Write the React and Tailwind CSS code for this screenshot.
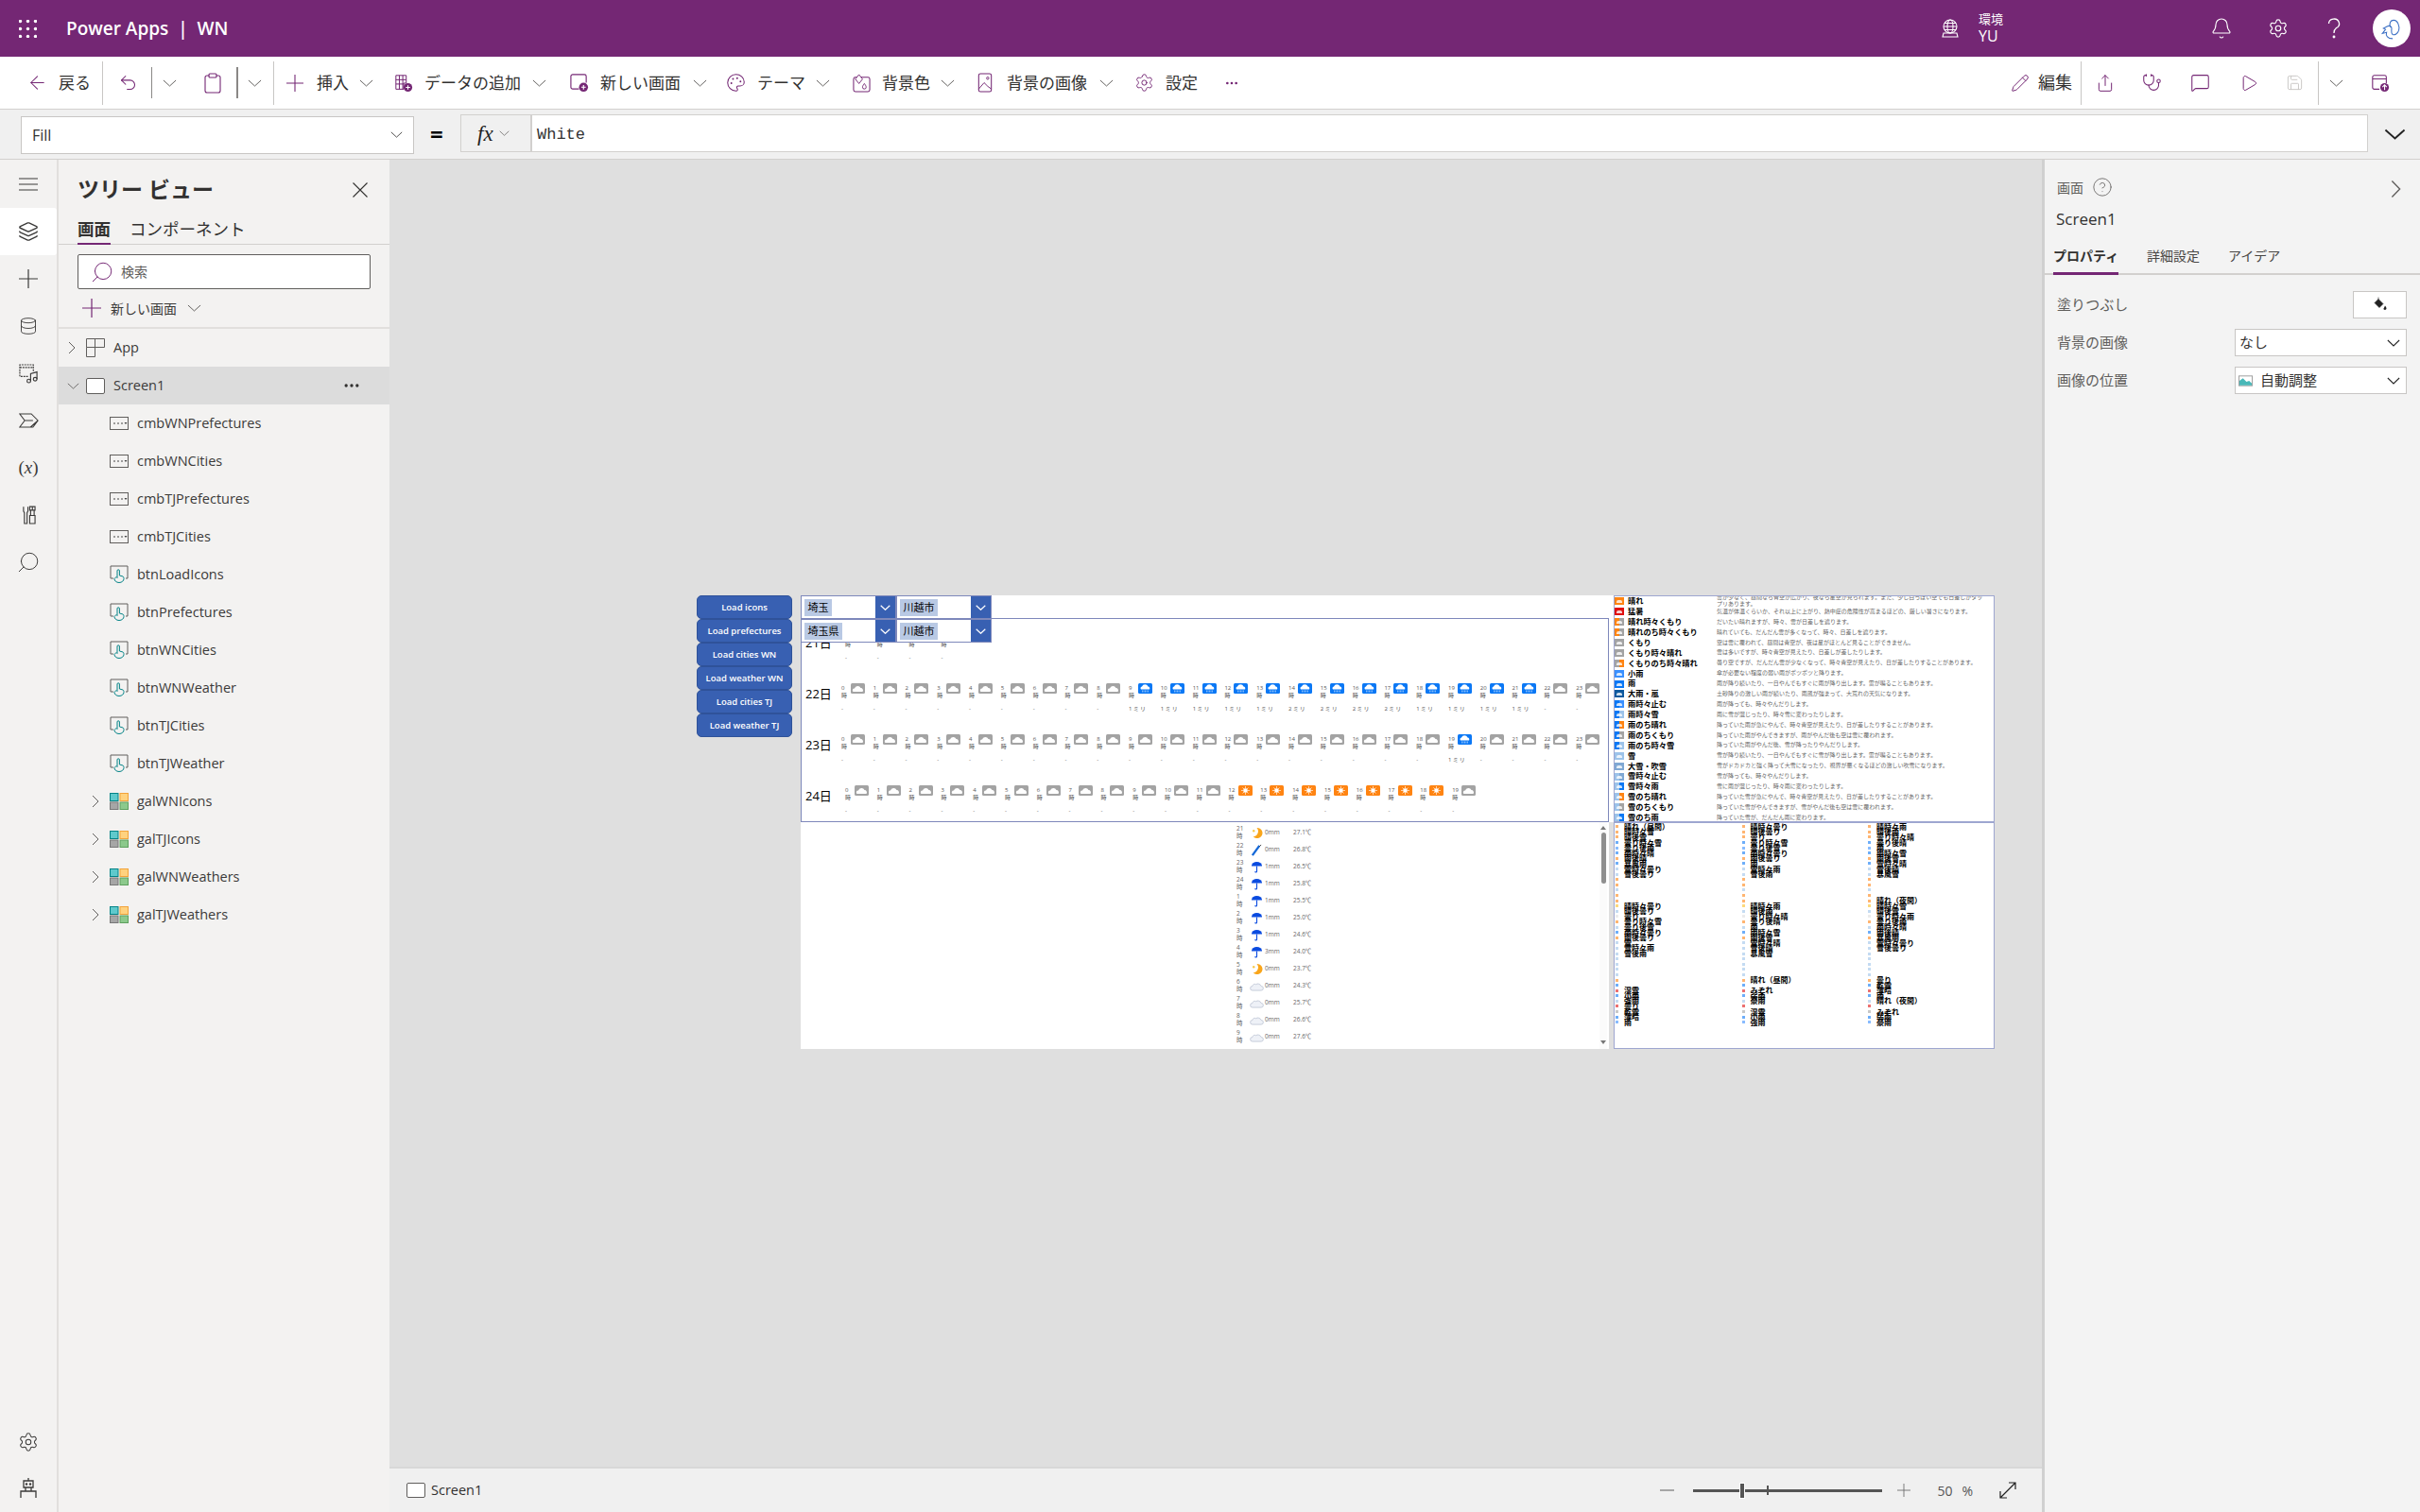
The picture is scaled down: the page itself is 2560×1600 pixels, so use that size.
import React from "react";
import { ArrowLeft, Undo2, Clipboard, Palette, Settings, Pencil, Share, Stethoscope, MessageSquare, Play, Save, Bell, HelpCircle, Search, Layers, Database, MoreHorizontal } from "lucide-react";

const P = "#742774";
const Chev = ({ c = "w-[15px] h-[8px]", color = "#605e5c", sw = 1 }) => (
  <svg viewBox="0 0 16 8" className={c} preserveAspectRatio="none"><polyline points="1,1 8,7 15,1" fill="none" stroke={color} strokeWidth={sw} /></svg>
);
const ChevR = ({ c = "w-[8px] h-[14px]", color = "#605e5c" }) => (
  <svg viewBox="0 0 8 14" className={c} preserveAspectRatio="none"><polyline points="1,1 7,7 1,13" fill="none" stroke={color} strokeWidth="1" /></svg>
);
const Cross = ({ c = "w-[18px] h-[18px]", color = P }) => (
  <svg viewBox="0 0 20 20" className={`${c} shrink-0`}><path d="M10 0v20M0 10h20" stroke={color} strokeWidth="1.200" /></svg>
);
const Sep = ({ c = "" }) => <div className={`w-px h-[46px] bg-[#c8c6c4] ${c}`} />;
const Badge = ({ up }) => (
  <g><circle cx="16" cy="16" r="5" fill={P} /><path d={up ? "M16 19v-6M13.500 15.500L16 13l2.500 2.500" : "M16 13.500v5M13.500 16h5"} stroke="#fff" strokeWidth="1.200" fill="none" /></g>
);
const DataIcon = () => (
  <svg viewBox="0 0 22 22" className="w-[20px] h-[20px]"><path d="M2 2h12v9H11v7H2zM6 2v16M10 2v16M2 7h12M2 12h9" fill="none" stroke={P} strokeWidth="1.100" /><Badge /></svg>
);
const NewIcon = () => (
  <svg viewBox="0 0 22 22" className="w-[21px] h-[21px]"><path d="M11 18H4a2 2 0 0 1-2-2V4a2 2 0 0 1 2-2h13a2 2 0 0 1 2 2v7" fill="none" stroke={P} strokeWidth="1.200" /><Badge /></svg>
);
const BgIcon = () => (
  <svg viewBox="0 0 20 22" className="w-[19px] h-[21px]"><rect x="1" y="5" width="18" height="16" rx="2" fill="none" stroke={P} strokeWidth="1.100" /><path d="M3 7l4-5 4 5-4 5zM13 12c1.500 2 2 3 2 4a2 2 0 0 1-4 0c0-1 .5-2 2-4z" fill="#fff" stroke={P} strokeWidth="1" /></svg>
);
const ImgIcon = () => (
  <svg viewBox="0 0 16 22" className="w-[16px] h-[21px]"><rect x="1" y="1" width="14" height="20" rx="2" fill="none" stroke={P} strokeWidth="1.100" /><path d="M1 18l6-7 4 4M11 15l4 3" fill="none" stroke={P} strokeWidth="1" /><circle cx="11" cy="6" r="1.300" fill="none" stroke={P} /></svg>
);
const PublishIcon = () => (
  <svg viewBox="0 0 22 22" className="w-[20px] h-[20px]"><path d="M10 18H4a2 2 0 0 1-2-2V4a2 2 0 0 1 2-2h12a2 2 0 0 1 2 2v7M2 6h16" fill="none" stroke={P} strokeWidth="1.200" /><Badge up /></svg>
);

const TBItem = ({ icon, label, w, chev = true, lg = "ml-[12px]", cg = "ml-[10px]", m = "" }) => (
  <div className={`flex items-center ${m}`}>
    {icon}
    <span className={`${lg} text-[17px] text-[#323130] whitespace-nowrap`} style={{ width: w }}>{label}</span>
    {chev && <div className={`${cg} flex`}><Chev /></div>}
  </div>
);

const Header = () => (
  <header className="h-[60px] shrink-0 bg-[#742774] flex items-center text-white">
    <svg viewBox="0 0 19 19" className="ml-[20px] w-[19px] h-[19px]" fill="#fff">
      {[1.500, 9.500, 17.500].map(y => [1.500, 9.500, 17.500].map(x => <circle key={`${x}${y}`} cx={x} cy={y} r="1.700" />))}
    </svg>
    <span className="ml-[31px] text-[19px] font-semibold whitespace-pre">Power Apps  |  WN</span>
    <div className="flex-1" />
    <svg viewBox="0 0 20 20" className="w-[20px] h-[20px] -ml-[2px]" fill="none" stroke="#fff" strokeWidth="1.100"><circle cx="10" cy="8" r="7" /><ellipse cx="10" cy="8" rx="3" ry="7" /><path d="M3 8h14M4 4.500h12M4 11.500h12M3 15h14l1 4H2z" /></svg>
    <div className="ml-[20px] w-[60px] flex flex-col">
      <span className="text-[13px] leading-[16px]">環境</span>
      <span className="text-[16px] leading-[20px]">YU</span>
    </div>
    <Bell size={24} strokeWidth={1.100} className="ml-[185px]" />
    <Settings size={22} strokeWidth={1.300} className="ml-[37px]" />
    <svg viewBox="0 0 14 22" className="ml-[41px] w-[14px] h-[22px]" fill="none" stroke="#fff" strokeWidth="1.300"><path d="M1.500 6a5.500 5 0 1 1 8 4.500C7.500 12 7 13 7 16" /><circle cx="7" cy="20" r=".8" fill="#fff" /></svg>
    <div className="ml-[34px] mr-[10px] w-[40px] h-[40px] rounded-full bg-white flex items-center justify-center">
      <svg viewBox="0 0 24 24" className="w-[26px] h-[26px]" fill="none" stroke="#3b6fc4" strokeWidth="1"><path d="M13 22c-5 0-7-3-6-6l-4 1 3-4-2-1 4-2c2-1 4 0 4 2 0 3-1 4 1 6 2 1 5-1 6-4 1-4-1-10-5-10-3 0-5 3-3 7" /></svg>
    </div>
  </header>
);

const Toolbar = () => (
  <div className="h-[55px] shrink-0 bg-white flex items-center">
    <ArrowLeft size={23} strokeWidth={1.100} color={P} className="ml-[28px]" />
    <span className="ml-[11px] w-[35px] text-[17px] text-[#323130]">戻る</span>
    <Sep c="ml-[11px]" />
    <Undo2 size={21} strokeWidth={1.200} color={P} className="ml-[16px]" />
    <div className="ml-[14px] w-px h-[33px] bg-[#8a8886]" />
    <div className="ml-[11px] flex"><Chev /></div>
    <Clipboard size={24} strokeWidth={1.100} color={P} className="ml-[26px]" />
    <div className="ml-[13px] w-[2px] h-[33px] bg-[#8a8886]" />
    <div className="ml-[10px] flex"><Chev /></div>
    <Sep c="ml-[12px]" />
    <div className="ml-[13px] flex items-center">
      <TBItem icon={<Cross />} label="挿入" w={35} lg="ml-[14px]" />
      <TBItem icon={<DataIcon />} label="データの追加" w={104} m="ml-[22px]" />
      <TBItem icon={<NewIcon />} label="新しい画面" w={88} m="ml-[24px]" />
      <TBItem icon={<Palette size={21} strokeWidth={1.200} color={P} />} label="テーマ" w={54} m="ml-[20px]" cg="ml-[8px]" />
      <TBItem icon={<BgIcon />} label="背景色" w={52} m="ml-[24px]" />
      <TBItem icon={<ImgIcon />} label="背景の画像" w={88} lg="ml-[15px]" m="ml-[24px]" />
      <TBItem icon={<Settings size={21} strokeWidth={1.100} color={P} />} label="設定" w={34} chev={false} m="ml-[22px]" />
      <MoreHorizontal size={16} color={P} className="ml-[28px]" />
    </div>
    <div className="flex-1" />
    <Pencil size={20} strokeWidth={1.200} color={P} />
    <span className="ml-[9px] text-[18px] text-[#323130] w-[37px]">編集</span>
    <Sep c="ml-[8px]" />
    <Share size={20} strokeWidth={1.200} color={P} className="ml-[15px]" />
    <Stethoscope size={21} strokeWidth={1.200} color={P} className="ml-[29px]" />
    <MessageSquare size={21} strokeWidth={1.200} color={P} className="ml-[30px]" />
    <Play size={20} strokeWidth={1.200} color={P} className="ml-[31px]" />
    <Save size={19} strokeWidth={1.200} color="#c8c6c4" className="ml-[29px]" />
    <Sep c="ml-[15px]" />
    <div className="ml-[11px] flex"><Chev /></div>
    <div className="ml-[29px] mr-[32px] flex"><PublishIcon /></div>
  </div>
);

const FormulaBar = () => (
  <div className="h-[54px] shrink-0 bg-[#f0f0f0] border-y border-[#d2d0ce] flex items-center">
    <div className="ml-[22px] w-[416px] h-[40px] bg-white border border-[#c8c6c4] flex items-center mt-[1px] px-[11px] justify-between">
      <span className="text-[16px] text-[#323130]">Fill</span>
      <Chev c="w-[13px] h-[7px]" color="#323130" />
    </div>
    <span className="ml-[17px] w-[32px] text-[24px] font-bold text-black leading-none">=</span>
    <div className="h-[40px] w-[75px] border border-[#d2d0ce] flex items-center -mt-[2px]">
      <span className="ml-[17px] font-['Liberation_Serif',serif] italic text-[23px] text-[#222] leading-none">fx</span>
      <span className="ml-[6px] flex"><Chev c="w-[11px] h-[6px]" /></span>
    </div>
    <div className="h-[40px] w-[1943px] bg-white border border-[#d2d0ce] flex items-center -mt-[2px]">
      <span className="ml-[5px] pt-[4px] font-['Liberation_Mono',monospace] text-[17px] text-[#333]">White</span>
    </div>
    <div className="ml-[17px] flex"><Chev c="w-[23px] h-[12px]" color="#222" sw={1.300} /></div>
  </div>
);

const railIco = "#3b3a39";
const RailCell = ({ children }) => <div className="h-[50px] w-full flex items-center justify-center shrink-0">{children}</div>;
const Rail = () => (
  <aside className="w-[62px] shrink-0 bg-[#f3f2f1] border-r-2 border-[#e1dfdd] flex flex-col items-center text-[#3b3a39]">
    <div className="h-[51px] flex items-center justify-center w-full">
      <svg viewBox="0 0 20 14" className="w-[20px] h-[14px]"><path d="M0 1h20M0 7h20M0 13h20" stroke={railIco} strokeWidth="1" /></svg>
    </div>
    <div className="h-[50px] w-[60px] self-start bg-white rounded-r-[3px] flex items-center justify-center"><Layers size={22} strokeWidth={1.500} color={railIco} /></div>
    <RailCell><Cross c="w-[20px] h-[20px]" color={railIco} /></RailCell>
    <RailCell><Database size={20} strokeWidth={1.100} color={railIco} /></RailCell>
    <RailCell>
      <svg viewBox="0 0 22 22" className="w-[21px] h-[21px]" fill="none" stroke={railIco} strokeWidth="1.200"><path d="M10 14H1V1h15v7M1 4h15" strokeDasharray="2 1" /><path d="M13 19V11l7-2v8" /><circle cx="11" cy="19" r="2" /><circle cx="18" cy="17" r="2" /></svg>
    </RailCell>
    <RailCell>
      <svg viewBox="0 0 24 18" className="w-[21px] h-[16px]" fill="none" stroke={railIco} strokeWidth="1.200"><path d="M1 1h14l8 8-6 8H1l6-8zM7 9h10M23 9l-9 8" /></svg>
    </RailCell>
    <RailCell><span className="font-['Liberation_Serif',serif] text-[19px] whitespace-pre">(<i>x</i>)</span></RailCell>
    <RailCell>
      <svg viewBox="0 0 16 22" className="w-[15px] h-[21px]" fill="none" stroke={railIco} strokeWidth="1.200"><path d="M2 1v5l1 2v12h3V8l1-2V1M12 1v4M9 1h6v4H9zM10 5v6M14 5v6M9 11h6v9H9z" /></svg>
    </RailCell>
    <RailCell><Search size={26} strokeWidth={0.900} color={railIco} className="-scale-x-100" /></RailCell>
    <div className="flex-1" />
    <Settings size={22} strokeWidth={1.100} color={railIco} className="mb-[27px]" />
    <svg viewBox="0 0 18 22" className="w-[18px] h-[22px] mb-[14px]" fill="none" stroke={railIco} strokeWidth="1.300"><path d="M9 0v3M4 3h10v7H4zM1 21v-7h16v7M6 10v4M12 10v4" /><circle cx="7" cy="6.500" r=".6" fill={railIco} /><circle cx="11" cy="6.500" r=".6" fill={railIco} /></svg>
  </aside>
);

const ComboIco = () => (
  <svg viewBox="0 0 20 14" className="w-[20px] h-[14px]"><rect x=".5" y=".5" width="19" height="13" fill="none" stroke="#605e5c" /><path d="M4 7h2M8 7h2M12 7h2" stroke="#444" /><path d="M15.500 6h3l-1.500 2z" fill="#444" /></svg>
);
const BtnIco = () => (
  <svg viewBox="0 0 20 20" className="w-[20px] h-[20px]" fill="none"><path d="M4 14H1V1h18v13h-2" stroke="#605e5c" /><path d="M10 18.500c-3 0-5-2-5-4l2-2 1 1V6a1.200 1.200 0 0 1 2.400 0v5l3.600 1c1 .5 1 1.500 1 2.500 0 2-2 4-5 4z" fill="#f3f2f1" stroke="#038387" /></svg>
);
const GalIco = () => (
  <svg viewBox="0 0 20 18" className="w-[20px] h-[18px]"><rect x=".5" y=".5" width="8.500" height="8" fill="#5fc9cc" stroke="#038387" /><rect x="11" y=".5" width="8.500" height="8" fill="#ffd27f" stroke="#f2a33a" /><rect x=".5" y="10" width="8.500" height="7.500" fill="#a6a6a6" stroke="#777" /><rect x="11" y="10" width="8.500" height="7.500" fill="#8cc98c" stroke="#5ea05e" /></svg>
);

const TreeRow = ({ name, icon, exp }) => (
  <div className="h-[40px] flex items-center shrink-0">
    <div className="w-[54px] pl-[35px] flex justify-start">{exp && <ChevR />}</div>
    <div className="w-[29px] flex">{icon}</div>
    <span className="text-[14.500px] text-[#3b3a39]">{name}</span>
  </div>
);

const Tree = () => (
  <aside className="w-[350px] shrink-0 bg-[#f3f2f1] flex flex-col">
    <div className="h-[63px] flex items-center justify-between pl-[20px] pr-[23px]">
      <span className="text-[23px] font-semibold text-[#323130]">ツリー ビュー</span>
      <svg viewBox="0 0 16 16" className="w-[16px] h-[16px]"><path d="M.5.5l15 15M15.500.5l-15 15" stroke="#323130" strokeWidth="1.100" /></svg>
    </div>
    <div className="h-[27px] border-b border-[#d2d0ce] flex pl-[20px] gap-[20px]">
      <span className="h-[27px] border-b-[2px] border-[#742774] text-[17.500px] font-bold leading-[20px] text-[#323130]">画面</span>
      <span className="text-[17.500px] leading-[20px] text-[#323130]">コンポーネント</span>
    </div>
    <div className="mt-[10px] mx-[20px] h-[37px] bg-white border border-[#605e5c] rounded-[2px] flex items-center pl-[12px]">
      <Search size={26} strokeWidth={0.900} color={P} className="-scale-x-100" />
      <span className="ml-[7px] text-[14px] text-[#605e5c]">検索</span>
    </div>
    <div className="h-[42px] border-b-2 border-[#e1dfdd] flex items-center pl-[25px]">
      <Cross c="w-[20px] h-[20px]" />
      <span className="ml-[10px] text-[14px] text-[#3b3a39]">新しい画面</span>
      <span className="ml-[11px] flex"><Chev /></span>
    </div>
    <div className="h-[40px] flex items-center">
      <div className="w-[29px] pl-[10px]"><ChevR /></div>
      <svg viewBox="0 0 20 20" className="w-[20px] h-[20px]" fill="none" stroke="#605e5c"><path d="M.5.5h19v9h-19zM.5 9.500v10h9v-19" /></svg>
      <span className="ml-[9px] text-[14.500px] text-[#3b3a39]">App</span>
    </div>
    <div className="h-[40px] flex items-center bg-[#dcdcdc]">
      <div className="w-[29px] pl-[9px]"><Chev c="w-[13px] h-[7px]" /></div>
      <div className="w-[20px] h-[17px] bg-white border border-[#605e5c] rounded-[2px]" />
      <span className="ml-[9px] text-[14.500px] text-[#3b3a39]">Screen1</span>
      <MoreHorizontal size={20} className="ml-auto mr-[30px]" color="#323130" />
    </div>
    {["cmbWNPrefectures", "cmbWNCities", "cmbTJPrefectures", "cmbTJCities"].map(n => <TreeRow key={n} name={n} icon={<ComboIco />} />)}
    {["btnLoadIcons", "btnPrefectures", "btnWNCities", "btnWNWeather", "btnTJCities", "btnTJWeather"].map(n => <TreeRow key={n} name={n} icon={<BtnIco />} />)}
    {["galWNIcons", "galTJIcons", "galWNWeathers", "galTJWeathers"].map(n => <TreeRow key={n} name={n} icon={<GalIco />} exp />)}
  </aside>
);

const Tile = ({ kind }) => {
  const bg = { c: "#a3a3a3", r: "#0b78f5", s: "#ff8412" }[kind];
  return (
    <svg viewBox="0 0 30 22" className="w-[15px] h-[11px] block shrink-0">
      <rect width="30" height="22" rx="3" fill={bg} />
      {kind === "s" ? (
        <g stroke="#fff" strokeWidth="1.300"><circle cx="15" cy="11" r="4" fill="#fff" /><path d="M15 2v4M15 16v4M6 11h4M20 11h4M9 5l3 3M18 14l3 3M21 5l-3 3M12 14l-3 3" /></g>
      ) : (
        <path d={kind === "r" ? "M6 13a4 4 0 0 1 2-6 7 7 0 0 1 13 0 4 4 0 0 1 3 6z" : "M5 18a4 4 0 0 1 3-7 7 7 0 0 1 13-1 5 5 0 0 1 4 8z"} fill="#fff" />
      )}
      {kind === "r" && <path d="M9 15v4M12 15v4M15 15v4M18 15v4M21 15v4" stroke="#cfe4ff" strokeWidth="1.200" />}
    </svg>
  );
};

const HourCell = ({ h, k, amt }) => (
  <div className="w-[33.800px] shrink-0 h-[40px] relative">
    <div className="flex">
      <div className="w-[10px] text-[6px] leading-[8px] text-[#555] pt-[1px]">
        <div>{h}</div><div>時</div>
      </div>
      <Tile kind={k} />
    </div>
    <div className="text-[6px] leading-[8px] mt-[6px] text-[#555] tracking-[1.200px] whitespace-nowrap">{amt}</div>
  </div>
);

const DayRow = ({ day, cells }) => (
  <div className="h-[54px] shrink-0 flex items-start">
    <div className="w-[46px] pl-[4px] pt-[10px] text-[13px] leading-[20px] text-black">{day}</div>
    <div className="flex pt-[9px]">{cells.map(c => <HourCell key={c.h} {...c} />)}</div>
  </div>
);

const range = n => Array.from({ length: n }, (_, i) => i);
const d21 = range(4).map(h => ({ h, k: "c", amt: "-" }));
const d22 = range(24).map(h => ({ h, k: h >= 9 && h <= 21 ? "r" : "c", amt: h >= 14 && h <= 17 ? "2ミリ" : h >= 9 && h <= 21 ? "1ミリ" : "-" }));
const d23 = range(24).map(h => ({ h, k: h === 19 ? "r" : "c", amt: h === 19 ? "1ミリ" : "-" }));
const d24 = range(20).map(h => ({ h, k: h >= 12 && h <= 18 ? "s" : "c", amt: "-" }));

const Moon = () => (
  <svg viewBox="0 0 14 14" className="w-[13px] h-[13px]"><path d="M7 1a6 6 0 1 1-4 10A6 6 0 0 0 7 1z" fill="#f9a51a" /><circle cx="3.500" cy="4.500" r="1.300" fill="#f7c948" /></svg>
);
const Umb = () => (
  <svg viewBox="0 0 14 14" className="w-[13px] h-[13px]"><path d="M1 6a6 5 0 0 1 12 0z" fill="#0a4be0" /><path d="M7 6v6c0 1-2 1-2 0" fill="none" stroke="#0a4be0" strokeWidth="1.200" /></svg>
);
const Folded = () => (
  <svg viewBox="0 0 14 14" className="w-[13px] h-[13px]"><path d="M2 13l8-11" stroke="#1468d8" strokeWidth="2.500" /><path d="M10 3l2-2" stroke="#333" /></svg>
);
const Cloud = () => (
  <svg viewBox="0 0 16 12" className="w-[15px] h-[11px]"><path d="M3 11a2.500 2.500 0 0 1 0-5 3 3 0 0 1 4-2 4 4 0 0 1 6 2 2.500 2.500 0 0 1 0 5z" fill="#eef1f7" stroke="#c3c9d8" /></svg>
);
const hourly = [
  ["21", <Moon />, "0mm", "27.1℃"], ["22", <Folded />, "0mm", "26.8℃"], ["23", <Umb />, "1mm", "26.5℃"], ["24", <Umb />, "1mm", "25.8℃"],
  ["1", <Umb />, "1mm", "25.5℃"], ["2", <Umb />, "1mm", "25.0℃"], ["3", <Umb />, "1mm", "24.6℃"], ["4", <Umb />, "3mm", "24.0℃"],
  ["5", <Moon />, "0mm", "23.7℃"], ["6", <Cloud />, "0mm", "24.3℃"], ["7", <Cloud />, "0mm", "25.7℃"], ["8", <Cloud />, "0mm", "26.6℃"], ["9", <Cloud />, "0mm", "27.6℃"],
];

const O = "#ff8412", R = "#e01010", G = "#a3a3a3", B = "#0b78f5", L = "#3a90ff", N = "#0f5a9e", S = "#9cc3ea", T = "#7fa8d4";
const icons = [
  ["晴れ", O, O, "雲が少なく、昼間なら青空が広がり、夜なら星空が見られます。また、少し白っぽい空でも日差しがタップリあります。"],
  ["猛暑", R, R, "気温が体温くらいか、それ以上に上がり、熱中症の危険性が高まるほどの、厳しい暑さになります。"],
  ["晴れ時々くもり", O, G, "だいたい晴れますが、時々、雲が日差しを遮ります。"],
  ["晴れのち時々くもり", O, G, "晴れていても、だんだん雲が多くなって、時々、日差しを遮ります。"],
  ["くもり", G, G, "空は雲に覆われて、昼間は青空が、夜は星がほとんど見ることができません。"],
  ["くもり時々晴れ", G, G, "雲は多いですが、時々青空が見えたり、日差しが差したりします。"],
  ["くもりのち時々晴れ", G, O, "曇り空ですが、だんだん雲が少なくなって、時々青空が見えたり、日が差したりすることがあります。"],
  ["小雨", L, L, "傘が必要ない程度の弱い雨がポツポツと降ります。"],
  ["雨", B, B, "雨が降り続いたり、一日やんでもすぐに雨が降り出します。雷が鳴ることもあります。"],
  ["大雨・嵐", N, N, "土砂降りの激しい雨が続いたり、雨風が強まって、大荒れの天気になります。"],
  ["雨時々止む", B, L, "雨が降っても、時々やんだりします。"],
  ["雨時々雪", B, S, "雨に雪が混じったり、時々雪に変わったりします。"],
  ["雨のち晴れ", B, O, "降っていた雨が急にやんで、時々青空が見えたり、日が差したりすることがあります。"],
  ["雨のちくもり", B, G, "降っていた雨がやんできますが、雨がやんだ後も空は雲に覆われます。"],
  ["雨のち時々雪", B, S, "降っていた雨がやんだ後、雪が降ったりやんだりします。"],
  ["雪", S, S, "雪が降り続いたり、一日やんでもすぐに雪が降り出します。雷が鳴ることもあります。"],
  ["大雪・吹雪", T, T, "雪がドカドカと強く降って大雪になったり、視界が悪くなるほどの激しい吹雪になります。"],
  ["雪時々止む", S, T, "雪が降っても、時々やんだりします。"],
  ["雪時々雨", S, B, "雪に雨が混じったり、時々雨に変わったりします。"],
  ["雪のち晴れ", S, O, "降っていた雪が急にやんで、時々青空が見えたり、日が差したりすることがあります。"],
  ["雪のちくもり", S, G, "降っていた雪がやんできますが、雪がやんだ後も空は雲に覆われます。"],
  ["雪のち雨", S, B, "降っていた雪が、だんだん雨に変わります。"],
];

const c1 = ["晴れ（昼間）", "晴時々雪", "晴後雪", "曇り時々雪", "曇り後雨", "雨時々晴", "雨後晴", "暴風雨", "雪時々曇り", "雪後曇り", "", "", "", "", "", "晴時々曇り", "晴後曇り", "曇り", "曇り時々雪", "曇り後雪", "雨時々曇り", "雨後曇り", "雪", "雪時々雨", "雪後雨", "", "", "", "", "", "", "湿雪", "小雨", "強雨", "曇り", "乾雪", "薄暗", "雨"];
const c2 = ["晴時々曇り", "晴後曇り", "曇り", "曇り時々雪", "曇り後雪", "雨時々曇り", "雨後曇り", "雨", "雪時々雨", "雪後雨", "", "", "", "", "", "晴時々雨", "晴後雨", "曇り時々晴", "曇り後晴", "雨", "雨時々雪", "雨後雪", "雪時々晴", "雪後晴", "暴風雪", "", "", "", "", "晴れ（昼間）", "", "みぞれ", "弱雨", "豪雨", "", "湿雪", "小雨", "強雨"];
const c3 = ["晴時々雨", "晴後雨", "曇り時々晴", "曇り後晴", "雨", "雨時々雪", "雨後雪", "雪時々晴", "雪後晴", "暴風雪", "", "", "", "", "晴れ（夜間）", "晴時々雪", "晴後雪", "曇り時々雨", "曇り後雨", "雨時々晴", "雨後晴", "暴風雨", "雪時々曇り", "雪後曇り", "", "", "", "", "", "曇り", "乾雪", "薄暗", "雨", "晴れ（夜間）", "", "みぞれ", "弱雨", "豪雨"];
const dots = [O, O, O, B, L, B, O, B, S, S, O, O, S, O, O, "#fbbf24", S, "#ddd", O, S, B, O, S, S, S, S, S, S, S, O, B, R, B, S, R, G, B, L];

const NameCol = ({ items }) => (
  <div className="w-[133.500px] shrink-0">
    {items.map((t, i) => (
      <div key={i} className="h-[5.600px] flex items-center">
        <div className="w-[3px] h-[3px] ml-[1px] shrink-0 opacity-60" style={{ background: dots[i] }} />
        <span className="ml-[6px] text-[8px] leading-[6px] font-bold text-black whitespace-nowrap">{t}</span>
      </div>
    ))}
  </div>
);

const Combo = ({ text }) => (
  <div className="w-[101px] h-[25px] flex border border-[#7e88bb] bg-white">
    <div className="flex-1 flex items-center pl-[3px]">
      <span className="bg-[#b9c9e4] text-[11px] leading-[18px] px-[3.500px] text-black">{text}</span>
    </div>
    <div className="w-[21px] bg-[#3860b2] flex items-center justify-center"><Chev c="w-[11px] h-[6px]" color="#fff" sw={1.800} /></div>
  </div>
);

const IconTile = ({ a, b }) => (
  <div className="w-[10px] h-[8px] flex shrink-0 relative">
    <div className="flex-1" style={{ background: a }} />
    <div className="flex-1" style={{ background: b }} />
    <div className="absolute left-[2px] top-[3px] w-[6px] h-[3px] bg-white opacity-80 rounded-t-[2px]" />
  </div>
);

const Stage = () => (
  <div className="absolute left-[325px] top-[461px] flex font-['Open_Sans','Noto_Sans_CJK_JP',sans-serif]">
    <div className="w-[101px] flex flex-col mr-[9px]">
      {["Load icons", "Load prefectures", "Load cities WN", "Load weather WN", "Load cities TJ", "Load weather TJ"].map(t => (
        <div key={t} className="h-[25px] pt-[1px] bg-[#3860b2] border border-[#2f5299] rounded-[5px] flex items-center justify-center text-white text-[9.500px] font-semibold whitespace-nowrap">{t}</div>
      ))}
    </div>
    <div className="w-[1261px] h-[480px] flex relative">
      <div className="w-[855px] shrink-0 bg-white">
        <div className="h-[24px]" />
        <div className="h-[216px] border border-[#7e88bb] overflow-hidden flex flex-col pt-[5px]">
          <DayRow day="21日" cells={d21} />
          <DayRow day="22日" cells={d22} />
          <DayRow day="23日" cells={d23} />
          <DayRow day="24日" cells={d24} />
        </div>
        <div className="h-[240px] flex relative">
          <div className="flex-1 flex flex-col pl-[461px] pt-[2px]">
            {hourly.map(([h, ic, mm, t], i) => (
              <div key={i} className="h-[18px] flex items-center text-[#666]">
                <div className="w-[14px] text-[6.500px] leading-[8px]"><div>{h}</div><div>時</div></div>
                <div className="w-[15px] flex justify-center">{ic}</div>
                <span className="w-[31px] text-[6.500px] pl-[1px]">{mm}</span>
                <span className="text-[6.500px]">{t}</span>
              </div>
            ))}
          </div>
          <div className="w-[8px] flex flex-col items-center bg-[#fbfbfb]">
            <svg viewBox="0 0 6 4" className="w-[6px] h-[4px] mt-[4px]"><path d="M0 4l3-4 3 4z" fill="#777" /></svg>
            <div className="w-[5px] h-[54px] mt-[3px] rounded-[3px] bg-[#8f8f8f]" />
            <div className="flex-1" />
            <svg viewBox="0 0 6 4" className="w-[6px] h-[4px] mb-[5px]"><path d="M0 0l3 4 3-4z" fill="#777" /></svg>
          </div>
          <div className="w-[2px]" />
        </div>
      </div>
      <div className="flex-1 flex flex-col">
        <div className="h-[240px] bg-white border-l-[5px] border-white">
          <div className="h-[240px] border border-[#9ea6d0] overflow-hidden relative">
            {icons.map(([n, a, b, d], i) => (
              <div key={n} className="flex items-center h-[10.900px]">
                <IconTile a={a} b={b} />
                <span className="ml-[4px] w-[94px] shrink-0 text-[8.200px] font-bold text-black whitespace-nowrap">{n}</span>
                <span className={`text-[6px] leading-[7px] text-[#666] ${i === 0 ? "w-[284px]" : "whitespace-nowrap"}`}>{d}</span>
              </div>
            ))}
          </div>
        </div>
        <div className="h-[240px] border-l-[5px] border-[#dfdfdf]">
          <div className="h-[240px] border border-[#9ea6d0] bg-white overflow-hidden flex pt-[1px]">
            <NameCol items={c1} /><NameCol items={c2} /><NameCol items={c3} />
          </div>
        </div>
      </div>
      <div className="absolute left-0 top-0 grid grid-cols-2">
        <Combo text="埼玉" /><Combo text="川越市" /><Combo text="埼玉県" /><Combo text="川越市" />
      </div>
    </div>
  </div>
);

const StatusBar = () => (
  <div className="h-[48px] shrink-0 bg-[#f0f0f0] border-t-2 border-[#d8d8d8] flex items-center">
    <div className="ml-[18px] w-[20px] h-[16px] bg-white border border-[#605e5c] rounded-[2px]" />
    <span className="ml-[6px] text-[14.500px] text-[#323130] -mt-[1px]">Screen1</span>
    <div className="flex-1" />
    <div className="w-[15px] h-[2px] bg-[#a6a6a6]" />
    <div className="ml-[20px] w-[200px] h-[3px] bg-[#555] relative">
      <div className="absolute left-[49px] -top-[7px] w-[6px] h-[17px] bg-[#555] border border-white" />
      <div className="absolute left-[78px] -top-[4px] w-[2px] h-[10px] bg-[#555]" />
    </div>
    <Cross c="ml-[16px] w-[14px] h-[14px]" color="#666" />
    <span className="ml-[28px] text-[14px] text-[#555]">50</span>
    <span className="ml-[10px] text-[14px] text-[#555]">%</span>
    <svg viewBox="0 0 18 18" className="ml-[28px] mr-[27px] w-[18px] h-[18px]" fill="none" stroke="#222" strokeWidth="1.200"><path d="M1 17L17 1M10 1h7v7M1 10v7h7" /></svg>
  </div>
);

const Props = () => (
  <aside className="w-[400px] shrink-0 bg-[#f3f3f3] border-l-[3px] border-[#d0d0d0] flex flex-col">
    <div className="mt-[18px] h-[22px] pl-[13px] pr-[20px] flex items-center">
      <span className="text-[14px] text-[#605e5c]">画面</span>
      <HelpCircle size={22} strokeWidth={0.900} color="#605e5c" className="ml-[9px]" />
      <ChevR c="ml-auto w-[11px] h-[20px] mt-[4px]" />
    </div>
    <div className="mt-[11px] h-[24px] pl-[12px] text-[17px] leading-[24px] text-[#323130]">Screen1</div>
    <div className="mt-[8px] h-[39px] border-b-2 border-[#d2d0ce] flex pl-[9px] text-[14px]">
      <span className="h-[39px] border-b-[3px] border-[#742774] leading-[38px] font-semibold text-[#323130] w-[69px] whitespace-nowrap">プロパティ</span>
      <span className="ml-[30px] leading-[38px] text-[#484644]">詳細設定</span>
      <span className="ml-[30px] leading-[38px] text-[#484644]">アイデア</span>
    </div>
    <div className="mt-[17px] pl-[13px] pr-[14px] flex flex-col gap-[11px] text-[15px] text-[#605e5c]">
      <div className="h-[29px] flex items-center justify-between">
        <span>塗りつぶし</span>
        <div className="w-[57px] h-[29px] bg-white border border-[#c8c6c4] flex items-center justify-center">
          <svg viewBox="0 0 16 16" className="w-[16px] h-[17px] -mt-[3px]"><path d="M6 1v3M6 3l5 5-4 4-5-5z" fill="#222" stroke="#222" strokeWidth=".6" /><path d="M13 10c1.500 2 2 3 1 4s-3 0-2.500-1 .5-1 1.500-3z" fill="#222" /></svg>
        </div>
      </div>
      <div className="h-[29px] flex items-center justify-between">
        <span>背景の画像</span>
        <div className="w-[182px] h-[29px] bg-white border border-[#c8c6c4] flex items-center justify-between pl-[4px] pr-[6px] text-[#323130]">
          <span>なし</span><Chev c="w-[14px] h-[8px]" color="#222" sw={1.300} />
        </div>
      </div>
      <div className="h-[29px] flex items-center justify-between">
        <span>画像の位置</span>
        <div className="w-[182px] h-[29px] bg-white border border-[#c8c6c4] flex items-center pl-[3px] pr-[6px] text-[#323130]">
          <svg viewBox="0 0 16 12" className="w-[15px] h-[12px]"><rect x=".5" y=".5" width="15" height="11" fill="#fff" stroke="#999" /><path d="M1 11V6l4-3 4 4 3-1 3 3v2z" fill="#49b8b8" /></svg>
          <span className="ml-[8px]">自動調整</span>
          <span className="ml-auto flex"><Chev c="w-[14px] h-[8px]" color="#222" sw={1.300} /></span>
        </div>
      </div>
    </div>
  </aside>
);

export default function App() {
  return (
    <div className="w-[2560px] h-[1600px] flex flex-col overflow-hidden bg-white font-['Open_Sans','Noto_Sans_CJK_JP',sans-serif]">
      <Header />
      <Toolbar />
      <FormulaBar />
      <div className="flex-1 flex min-h-0">
        <Rail />
        <Tree />
        <div className="flex-1 flex flex-col min-w-0">
          <main className="flex-1 relative bg-[#dfdfdf]"><Stage /></main>
          <StatusBar />
        </div>
        <Props />
      </div>
    </div>
  );
}
